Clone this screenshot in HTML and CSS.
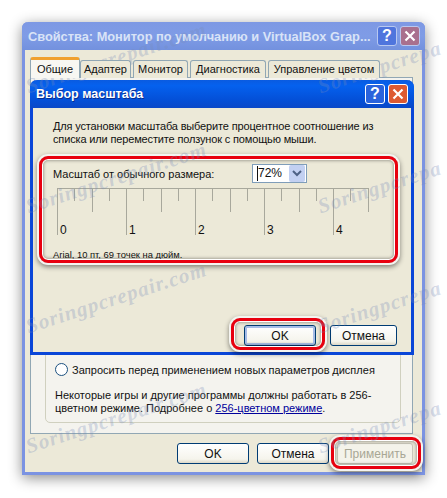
FILE: index.html
```html
<!DOCTYPE html>
<html lang="ru">
<head>
    <meta charset="UTF-8">
    <title>Выбор масштаба</title>
    <link rel="stylesheet" href="styles.css">
</head>
<body>
    <div class="stage">
        <!-- OUTER PROPERTIES WINDOW (inactive) -->
        <div class="window">
            <div class="titlebar titlebar-inactive">
                <span class="title">Свойства: Монитор по умолчанию и VirtualBox Grap...</span>
                <span class="cap-btn cap-help">?</span>
                <span class="cap-btn cap-close">
                    <svg viewBox="0 0 20 20" width="20" height="20"><path d="M5 5L15 15M15 5L5 15" class="cross"/></svg>
                </span>
            </div>
            <div class="client">
                <div class="tabs">
                    <div class="tab tab-active">Общие</div>
                    <div class="tab tab-adapter">Адаптер</div>
                    <div class="tab tab-monitor">Монитор</div>
                    <div class="tab tab-diag">Диагностика</div>
                    <div class="tab tab-color">Управление цветом</div>
                </div>
                <div class="tab-page">
                    <div class="group">
                        <label class="radio-row"><span class="radio"></span><span class="radio-text">Запросить перед применением новых параметров дисплея</span></label>
                        <p class="note">Некоторые игры и другие программы должны работать в 256-<br>цветном режиме. Подробнее о <a href="#">256-цветном режиме</a>.</p>
                    </div>
                </div>
                <div class="buttons buttons-outer">
                    <button class="btn btn-72">OK</button>
                    <button class="btn btn-72">Отмена</button>
                    <button class="btn btn-apply" disabled>Применить</button>
                </div>
            </div>

            <!-- SCALE DIALOG, lies over the tab page -->
            <div class="dialog">
                <div class="titlebar titlebar-active">
                    <span class="title">Выбор масштаба</span>
                    <span class="cap-btn cap-help">?</span>
                    <span class="cap-btn cap-close">
                        <svg viewBox="0 0 20 20" width="20" height="20"><path d="M5 5L15 15M15 5L5 15" class="cross"/></svg>
                    </span>
                </div>
                <div class="dialog-body">
                    <p class="intro">Для установки масштаба выберите процентное соотношение из<br>списка или переместите ползунок с помощью мыши.</p>
                    <div class="scale-row">
                        <span class="scale-label">Масштаб от обычного размера:</span>
                        <div class="combo">
                            <span class="combo-value">72%</span>
                            <span class="combo-arrow">
                                <svg viewBox="0 0 16 17" width="16" height="17"><path d="M4 6L8 10L12 6" class="chevron"/></svg>
                            </span>
                        </div>
                    </div>
                    <svg class="ruler" viewBox="0 0 320 60" width="320" height="60">
                        <path class="ruler-top" d="M4 0.5H315"/>
                        <path class="ruler-tick" d="M4.5 0V47M73.5 0V47M142.5 0V47M211.5 0V47M280.5 0V47"/>
                        <path class="ruler-tick" d="M39.5 0V24M108.5 0V24M177.5 0V24M246.5 0V24M315.5 0V24"/>
                        <path class="ruler-tick" d="M21.5 0V13M56.5 0V13M90.5 0V13M125.5 0V13M159.5 0V13M194.5 0V13M228.5 0V13M263.5 0V13M297.5 0V13"/>
                        <text x="7" y="46">0</text>
                        <text x="76" y="46">1</text>
                        <text x="145" y="46">2</text>
                        <text x="214" y="46">3</text>
                        <text x="283" y="46">4</text>
                    </svg>
                    <p class="font-info">Arial, 10 пт, 69 точек на дюйм.</p>
                    <div class="buttons">
                        <button class="btn btn-72 btn-default">OK</button>
                        <button class="btn btn-cancel">Отмена</button>
                    </div>
                </div>
            </div>
        </div>

        <!-- Red annotation frames -->
        <div class="mark mark-scale"></div>
        <div class="mark mark-ok"></div>
        <div class="mark mark-apply"></div>

        <!-- Watermark, the right column runs off the picture in the original -->
        <div class="stamps">
            <span>Soringpcrepair.com</span><span>Soringpcrepa</span>
            <span>Soringpcrepair.com</span><span>Soringpcrepa</span>
            <span>Soringpcrepair.com</span><span>Soringpcrepa</span>
            <span>Soringpcrepair.com</span><span>Soringpcrepa</span>
        </div>
    </div>
</body>
</html>
```
FILE: styles.css
```css
* {
    margin: 0;
    padding: 0;
    box-sizing: border-box;
}

body {
    background-color: white;
    font-family: "Liberation Sans", Arial, sans-serif;
    font-size: 11px;
    color: #111;
    overflow: hidden;
}

.stage {
    position: relative;
    width: 447px;
    height: 498px;
    padding: 22px;
    overflow: hidden;
}

/* Outer window */
.window {
    position: relative;
    display: flex;
    flex-direction: column;
    width: 403px;
    height: 453px;
    background-color: #ece9d8;
    border: 3px solid #7b93e2;
    border-top: 0;
    border-radius: 6px 6px 0 0;
    box-shadow: 0 3px 14px rgba(0, 0, 0, 0.45);
}

/* Title bars */
.titlebar {
    display: flex;
    align-items: center;
    height: 28px;
    flex-shrink: 0;
    gap: 3px;
    font-weight: bold;
}

.titlebar .title {
    flex: 1;
    white-space: nowrap;
}

.titlebar-inactive {
    margin: 0 -3px;
    padding: 0 5px 0 6px;
    background: linear-gradient(#7d98e4, #7f9ce6 50%, #7391de);
    border-radius: 6px 6px 0 0;
    color: #d9e3f7;
    font-size: 12.8px;
}

.titlebar-active {
    margin: 0 -3px;
    padding: 0 6px 0 6px;
    background: linear-gradient(#0a5be0, #0561ee 20%, #0450d8 70%, #0a48c8);
    border-radius: 7px 7px 0 0;
    color: white;
    font-size: 12.5px;
    text-shadow: 1px 1px 0 #0a2f90;
}

.cap-btn {
    display: flex;
    align-items: center;
    justify-content: center;
    width: 20px;
    height: 20px;
    flex-shrink: 0;
    border: 1px solid white;
    border-radius: 3px;
    color: white;
    font-size: 16px;
    font-weight: bold;
    text-shadow: none;
}

.cap-help {
    background-color: #2a63dc;
}

.cap-close {
    background-color: #dd5a32;
}

.titlebar-inactive .cap-help {
    background-color: #4f75dd;
    border-color: #b8c8f0;
}

.titlebar-inactive .cap-close {
    background-color: #a9708e;
    border-color: #b8c8f0;
}

.cross {
    stroke: white;
    stroke-width: 2.4;
    fill: none;
}

/* Client area */
.client {
    display: flex;
    flex-direction: column;
    flex: 1;
    padding: 7px 9px 8px 5px;
}

.tabs {
    display: flex;
    align-items: flex-end;
    height: 21px;
    gap: 2px;
    margin-bottom: -1px;
    position: relative;
    z-index: 1;
}

.tab {
    height: 18px;
    line-height: 17px;
    text-align: center;
    background-color: #ece9d8;
    border: 1px solid #91a7b4;
    border-bottom: 0;
    border-radius: 3px 3px 0 0;
    white-space: nowrap;
}

.tab-active {
    width: 50px;
    height: 21px;
    margin-right: -2px;
    line-height: 18px;
    background-color: #f8f7f2;
    border-top: 3px solid #f0a030;
}

.tab-adapter {
    width: 51px;
}

.tab-monitor {
    width: 55px;
}

.tab-diag {
    width: 76px;
}

.tab-color {
    width: 112px;
}

.tab-page {
    display: flex;
    flex-direction: column;
    height: 357px;
    background-color: #f4f3ee;
    border: 1px solid #91a7b4;
    padding: 14px 11px 10px 14px;
}

.group {
    display: flex;
    flex-direction: column;
    justify-content: flex-end;
    flex: 1;
    border: 1px solid #d0d0bf;
    border-radius: 5px;
    padding: 0 6px 7px 9px;
}

.radio-row {
    display: flex;
    align-items: center;
    gap: 4px;
    margin-bottom: 13px;
    white-space: nowrap;
}

.radio-text {
    word-spacing: -0.4px;
    letter-spacing: 0.02px;
}

.radio {
    width: 13px;
    height: 13px;
    flex-shrink: 0;
    background-color: white;
    border: 1px solid #1c5180;
    border-radius: 50%;
}

.note {
    line-height: 13px;
    white-space: nowrap;
}

.note a {
    color: #00009c;
}

/* Buttons */
.buttons {
    display: flex;
    justify-content: flex-end;
    gap: 14px;
    margin-top: auto;
}

.buttons-outer {
    gap: 8px;
}

.btn {
    height: 21px;
    font-family: inherit;
    font-size: 12px;
    color: #111;
    background: linear-gradient(#ffffff, #f5f4ec 80%, #dcd8c8);
    border: 1px solid #003c74;
    border-radius: 3px;
}

.btn-72 {
    width: 72px;
}

.btn-cancel {
    width: 67px;
}

.btn-apply {
    width: 76px;
    color: #a8a795;
    background: #f4f3ea;
    border-color: #c9c7ba;
}

.btn-default {
    box-shadow: inset 0 0 0 2px #a6bce6;
}

/* Scale dialog */
.dialog {
    position: absolute;
    top: 58px;
    left: 5px;
    display: flex;
    flex-direction: column;
    width: 384px;
    height: 275px;
    background-color: #ece9d8;
    border: 3px solid #0a46d8;
    border-top: 0;
    border-radius: 7px 7px 0 0;
}

.dialog-body {
    display: flex;
    flex-direction: column;
    flex: 1;
    padding: 12px 14px 6px 20px;
}

.intro {
    line-height: 13px;
    letter-spacing: -0.15px;
    white-space: nowrap;
}

.scale-row {
    display: flex;
    align-items: center;
    height: 19px;
    margin-top: 18px;
}

.scale-label {
    width: 199px;
}

.combo {
    display: flex;
    align-items: center;
    justify-content: space-between;
    width: 55px;
    height: 19px;
    padding: 0 1px 0 4px;
    background-color: white;
    border: 1px solid #7f9db9;
    font-size: 12px;
}

.combo-value {
    border-left: 1px solid #111;
    line-height: 15px;
}

.combo-arrow {
    display: flex;
    background-color: #c2d0f2;
    border-radius: 2px;
}

.chevron {
    stroke: #4d6185;
    stroke-width: 2;
    fill: none;
}

.ruler {
    display: block;
    margin-top: 5px;
}

.ruler-top {
    stroke: #a8a89c;
    fill: none;
}

.ruler-tick {
    stroke: #a8a89c;
    fill: none;
}

.ruler text {
    font-size: 12px;
    fill: #111;
}

.font-info {
    font-size: 9.4px;
    line-height: 13px;
}

/* Red annotation frames */
.mark {
    position: absolute;
    border: 3px solid #e8000f;
    border-radius: 9px;
    box-shadow: 0 0 0 2px #f4f4f0, 0 2px 5px 2px rgba(0, 0, 0, 0.45), inset 0 0 0 1px white, inset 0 0 3px 2px rgba(0, 0, 0, 0.3);
}

.mark-scale {
    left: 39px;
    top: 156px;
    width: 359px;
    height: 107px;
}

.mark-ok {
    left: 231px;
    top: 318px;
    width: 94px;
    height: 32px;
}

.mark-apply {
    left: 331px;
    top: 437px;
    width: 90px;
    height: 32px;
}

/* Watermark */
.stamps {
    position: absolute;
    top: 47px;
    left: 22px;
    display: grid;
    grid-template-columns: 292px 125px;
    grid-auto-rows: 120px;
    pointer-events: none;
}

.stamps span {
    width: max-content;
    height: 24px;
    font-family: "Liberation Serif", serif;
    font-size: 21px;
    font-style: italic;
    font-weight: bold;
    letter-spacing: 1px;
    color: rgba(120, 140, 185, 0.3);
    white-space: nowrap;
    transform: rotate(-18deg);
    transform-origin: 90px 12px;
}
```
